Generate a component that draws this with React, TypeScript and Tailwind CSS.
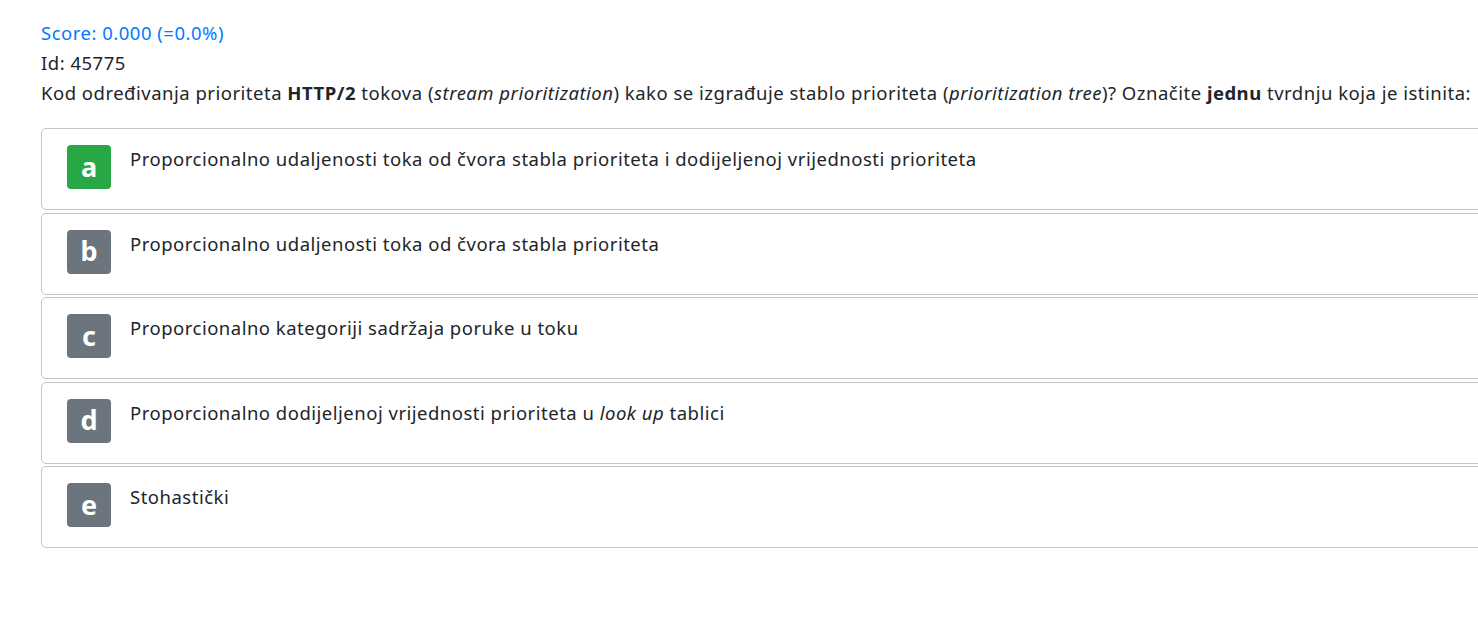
type Opt = { letter: string; text: React.ReactNode; correct?: boolean };

const options: Opt[] = [
  { letter: 'a', text: 'Proporcionalno udaljenosti toka od čvora stabla prioriteta i dodijeljenoj vrijednosti prioriteta', correct: true },
  { letter: 'b', text: 'Proporcionalno udaljenosti toka od čvora stabla prioriteta' },
  { letter: 'c', text: 'Proporcionalno kategoriji sadržaja poruke u toku' },
  {
    letter: 'd',
    text: (
      <>
        Proporcionalno dodijeljenoj vrijednosti prioriteta u <i>look up</i> tablici
      </>
    ),
  },
  { letter: 'e', text: 'Stohastički' },
];

export default function App() {
  return (
    <div
      className="w-full h-[620px] overflow-hidden bg-white text-[#212529] text-[18.5px] tracking-[0.5px]"
      style={{ fontFamily: '"Noto Sans", "Open Sans", sans-serif' }}
    >
      <div className="pl-[41px] pt-[18px] w-[1520px]">
        <div className="leading-[30px] text-[#007bff]">Score: 0.000 (=0.0%)</div>
        <div className="leading-[30px]">Id: 45775</div>
        <div className="leading-[30px] whitespace-nowrap">
          Kod određivanja prioriteta <b>HTTP/2</b> tokova (<i>stream prioritization</i>) kako se izgrađuje stablo prioriteta (
          <i>prioritization tree</i>)? Označite <b>jednu</b> tvrdnju koja je istinita:
        </div>
        <div className="mt-[20px] flex flex-col gap-[2.5px]">
          {options.map((o) => (
            <div
              key={o.letter}
              className="h-[82px] border border-[#c6c6c6] rounded-[5px] flex items-start pl-[25px] pt-[16px]"
            >
              <div
                className={`w-[44px] h-[44px] shrink-0 rounded-[4px] flex items-center justify-center text-white font-bold text-[27px] tracking-normal ${
                  o.correct ? 'bg-[#28a745]' : 'bg-[#6c757d]'
                }`}
              >
                <span className="leading-none -mt-[2px]">{o.letter}</span>
              </div>
              <div className="ml-[19px] leading-[28px] whitespace-nowrap">{o.text}</div>
            </div>
          ))}
        </div>
      </div>
    </div>
  );
}
